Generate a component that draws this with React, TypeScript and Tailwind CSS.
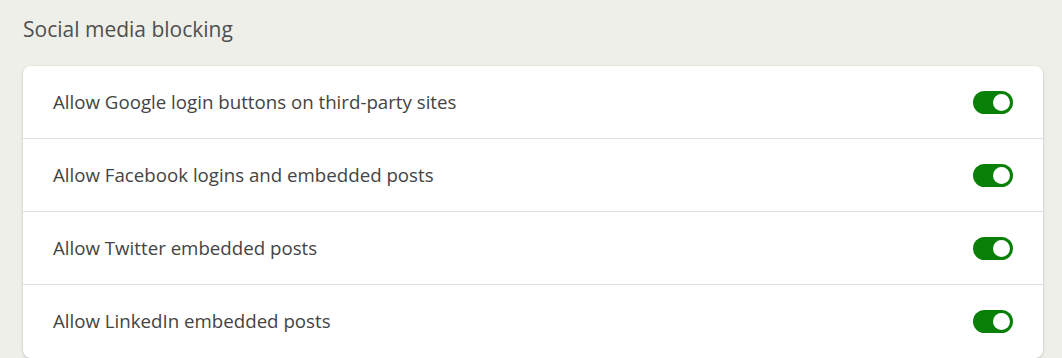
import React from "react";

const rows = [
  "Allow Google login buttons on third-party sites",
  "Allow Facebook logins and embedded posts",
  "Allow Twitter embedded posts",
  "Allow LinkedIn embedded posts",
];

function Toggle() {
  return (
    <div className="flex h-[23px] w-[40px] items-center justify-end rounded-full bg-[#088008] pr-[3px]">
      <div className="h-[17px] w-[17px] rounded-full bg-white" />
    </div>
  );
}

export default function App() {
  return (
    <div
      className="h-[358px] w-[1062px] overflow-hidden bg-[#efefea] pl-[23px] pr-[19px] pt-[14px]"
      style={{ fontFamily: '"Segoe UI", "Open Sans", "Noto Sans", sans-serif' }}
    >
      <h2 className="text-[21px] leading-[30px] text-[#4f4f4f]">Social media blocking</h2>
      <div className="mt-[22px] rounded-[8px] bg-white shadow-[0_1px_3px_rgba(0,0,0,0.2)]">
        {rows.map((r, i) => (
          <div
            key={r}
            className={`flex h-[73px] items-center justify-between pl-[30px] pr-[30px] ${
              i < rows.length - 1 ? "border-b border-[#e0e0db]" : ""
            }`}
          >
            <span className="text-[18.7px] text-[#444444]">{r}</span>
            <Toggle />
          </div>
        ))}
      </div>
    </div>
  );
}
